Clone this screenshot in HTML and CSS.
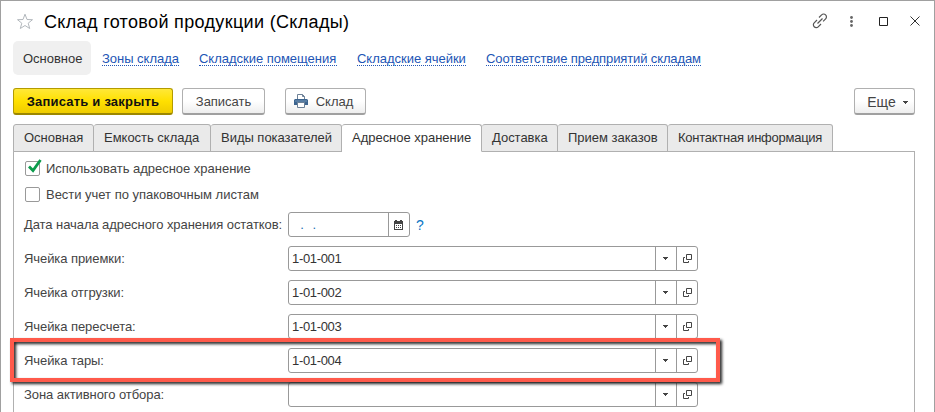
FILE: index.html
```html
<!DOCTYPE html>
<html lang="ru">
<head>
<meta charset="utf-8">
<title>Склад готовой продукции (Склады)</title>
<link rel="stylesheet" href="styles.css">
</head>
<body>
<svg width="0" height="0" class="defs">
  <symbol id="open" viewBox="0 0 9 9"><path d="M3.500.5h5v5h-5zM2 3.500H.5v5h5V7" fill="none" stroke="#444"/></symbol>
  <symbol id="down" viewBox="0 0 5 3"><path d="M0 0h5v1H4v1H3v1H2V2H1V1H0z" fill="#444"/></symbol>
</svg>
<div class="window">
  <header class="titlebar">
    <svg class="star" width="18" height="17" viewBox="0 0 18 17"><path d="M9 1.200l2 5.300 5.500.2-4.300 3.500 1.500 5.300L9 12.500l-4.700 3 1.500-5.300L1.500 6.700 7 6.500z" fill="none" stroke="#b3b8bd"/></svg>
    <h1>Склад готовой продукции (Склады)</h1>
    <div class="tools">
      <svg width="16" height="16" viewBox="0 0 16 16" fill="none" stroke="#555" stroke-width="1.200"><path d="M7 4.500l2.600-2.600a2.700 2.700 0 0 1 4 0 2.800 2.800 0 0 1 0 4l-2.500 2.500M5 7L2.200 9.800a2.800 2.800 0 0 0 0 4 2.800 2.800 0 0 0 4 0L9 11M5.500 10.500l5-5"/></svg>
      <svg width="3" height="11" viewBox="0 0 3 11" fill="#666"><circle cx="1.500" cy="1.500" r="1.400"/><circle cx="1.500" cy="5.500" r="1.400"/><circle cx="1.500" cy="9.500" r="1.400"/></svg>
      <svg width="9" height="9" viewBox="0 0 9 9"><path d="M.5.5h8v8h-8z" fill="none" stroke="#222"/></svg>
      <svg width="10" height="10" viewBox="0 0 10 10"><path d="M.5.5l9 9M9.500.5l-9 9" stroke="#333"/></svg>
    </div>
  </header>
  <nav>
    <span class="current">Основное</span>
    <a class="l1">Зоны склада</a>
    <a class="l2">Складские помещения</a>
    <a class="l3">Складские ячейки</a>
    <a class="l4">Соответствие предприятий складам</a>
  </nav>
  <div class="commands">
    <button class="primary">Записать и закрыть</button>
    <button class="save">Записать</button>
    <button class="print"><svg width="14" height="14" viewBox="0 0 14 14"><path d="M3.500 6V.5h5l2 2V6" fill="#fff" stroke="#6d8197"/><path d="M8.500.5v2h2" fill="none" stroke="#6d8197"/><path d="M0 6l1-1h12l1 1v5h-3V9H3v2H0z" fill="#3d6590"/><path d="M1 7h12" stroke="#7395b5"/><path d="M3.500 8.500h7v5h-7z" fill="#fff" stroke="#6d8197"/></svg>Склад</button>
    <button class="more">Еще<svg width="5" height="3"><use href="#down"/></svg></button>
  </div>
  <div class="tabs">
    <span class="t1">Основная</span><span class="t2">Емкость склада</span><span class="t3">Виды показателей</span><span class="t4 active">Адресное хранение</span><span class="t5">Доставка</span><span class="t6">Прием заказов</span><span class="t7">Контактная информация</span>
  </div>
  <main>
    <label class="check"><i><svg width="15" height="15" viewBox="0 0 15 15"><path d="M3 6.500l4 4L14.500 0" fill="none" stroke="#0b9b4b" stroke-width="2.800"/></svg></i><span>Использовать адресное хранение</span></label>
    <label class="check"><i></i><span>Вести учет по упаковочным листам</span></label>
    <div class="row date"><span class="label">Дата начала адресного хранения остатков:</span>
      <div class="field"><span class="value">&nbsp; .&nbsp; .</span><b><svg width="9" height="10" viewBox="0 0 9 10"><path d="M0 1h1V0h2v1h3V0h2v1h1v9H0z" fill="#444"/><path d="M1 4h7v5H1z" fill="#fff"/><path d="M2 5.500h5M2 7.500h5" stroke="#444" stroke-dasharray="1 1"/></svg></b></div><span class="help">?</span></div>
    <div class="row"><span class="label">Ячейка приемки:</span><div class="field"><span class="value">1-01-001</span><b><svg width="5" height="3"><use href="#down"/></svg></b><b><svg width="9" height="9"><use href="#open"/></svg></b></div></div>
    <div class="row"><span class="label">Ячейка отгрузки:</span><div class="field"><span class="value">1-01-002</span><b><svg width="5" height="3"><use href="#down"/></svg></b><b><svg width="9" height="9"><use href="#open"/></svg></b></div></div>
    <div class="row"><span class="label">Ячейка пересчета:</span><div class="field"><span class="value">1-01-003</span><b><svg width="5" height="3"><use href="#down"/></svg></b><b><svg width="9" height="9"><use href="#open"/></svg></b></div></div>
    <div class="row marked"><span class="label">Ячейка тары:</span><div class="field"><span class="value">1-01-004</span><b><svg width="5" height="3"><use href="#down"/></svg></b><b><svg width="9" height="9"><use href="#open"/></svg></b></div></div>
    <div class="row"><span class="label">Зона активного отбора:</span><div class="field"><span class="value"></span><b><svg width="5" height="3"><use href="#down"/></svg></b><b><svg width="9" height="9"><use href="#open"/></svg></b></div></div>
  </main>
</div>
</body>
</html>
```
FILE: styles.css
```css
*, *::after { box-sizing: border-box; }
body { margin: 0; background: #fff; font: 13px/16px "Liberation Sans", Arial, sans-serif; color: #444; overflow: hidden; letter-spacing: -.02px; }
svg { display: block; flex: none; }
.defs { position: absolute; }
.window { height: 412px; border: 1px solid #a0a0a0; border-bottom: 0; padding: 0 19px 0 12px; overflow: hidden; white-space: nowrap; }
.titlebar { display: flex; align-items: center; height: 40px; padding-left: 3px; }
.titlebar h1 { margin: 2px 0 0 10px; font-size: 18px; font-weight: 400; line-height: 24px; color: #000; letter-spacing: .34px; }
.tools { display: flex; align-items: center; margin-left: auto; margin-right: -5px; }
.tools svg:nth-child(2) { margin: 1px 0 0 22px; }
.tools svg:nth-child(3) { margin-left: 26px; }
.tools svg:nth-child(4) { margin-left: 22px; }
nav { display: flex; height: 34px; align-items: center; }
nav .current { width: 78px; height: 34px; line-height: 35px; padding-left: 10px; background: #f0f0f0; border-radius: 5px; color: #333; margin-right: 11px; }
nav a { color: #2255b5; height: 16px; line-height: 17px; border-bottom: 1px dotted #2255b5; margin-right: 20px; }
.l1 { width: 77px; } .l2 { width: 138px; } .l3 { width: 109px; } .l4 { width: 215px; letter-spacing: -.12px; }
.commands { display: flex; margin-top: 13px; height: 27px; }
button { display: flex; align-items: center; justify-content: center; height: 27px; padding: 1px 0 0; border: 1px solid #b0b0b0; border-bottom: 2px solid #a0a0a0; border-radius: 3px; background: linear-gradient(#fff 50%, #eee); font: inherit; color: #444; letter-spacing: inherit; }
.primary { width: 160px; background: linear-gradient(#ffe838, #ffe000 50%, #efcc00); border-color: #b39b00; border-bottom-color: #9c8700; font-weight: 700; color: #111; margin-right: 9px; letter-spacing: .2px; }
.save { width: 83px; margin-right: 20px; }
.print { width: 81px; gap: 8px; padding-right: 4px; }
.print svg { margin-top: -2px; }
.more { width: 61px; margin-left: auto; gap: 7px; font-size: 14px; padding-left: 6px; }
.more svg { margin-top: 2px; }
.tabs { display: flex; height: 28px; margin-top: 9px; position: relative; z-index: 1; color: #333; }
.tabs span { border: 1px solid #b0b0b0; border-left-width: 0; background: #eaeaea; border-radius: 3px 3px 0 0; padding-left: 10px; line-height: 26px; }
.tabs .t1 { width: 81px; border-left-width: 1px; } .t2 { width: 117px; } .t3 { width: 131px; } .t4 { width: 140px; } .t5 { width: 76px; } .t6 { width: 110px; } .t7 { width: 165px; letter-spacing: -.25px; }
.tabs .active { background: #fff; border-bottom-color: #fff; }
main { height: 280px; margin-top: -1px; border: 1px solid #b0b0b0; padding: 9px 0 0 10px; }
.check { display: flex; height: 16px; align-items: center; margin: 0 0 10px 1px; }
.check i { width: 15px; height: 15px; border: 1px solid #999; border-radius: 2px; margin: -2px 6px 0 0; }
.check svg { margin: -2px 0 0 0; overflow: visible; }
.row { display: flex; height: 25px; margin-bottom: 9px; align-items: center; }
.date { margin-top: -1px; }
.label { width: 264px; letter-spacing: -.07px; }
.field { display: flex; width: 410px; height: 25px; border: 1px solid #999; border-radius: 3px; color: #333; background: #fff; }
.date .field { width: 122px; }
.value { flex: 1; line-height: 24px; padding-left: 3px; letter-spacing: -.33px; }
.date .value { color: #2272b5; padding-left: 3px; letter-spacing: .5px; }
.field b { width: 21px; border-left: 1px solid #999; display: flex; align-items: center; justify-content: center; padding-right: 1px; }
.field b:last-child { padding-right: 0; }
.date .field b:last-child { padding-right: 1px; }
.help { color: #0b76c4; font-size: 14px; margin-left: 6px; }
.marked { position: relative; }
.marked::after { content: ""; position: absolute; left: -14px; top: -10px; width: 710px; height: 44px; border: 4px solid #ff5a4b; filter: drop-shadow(2px 2px 1.500px #222); }
```
